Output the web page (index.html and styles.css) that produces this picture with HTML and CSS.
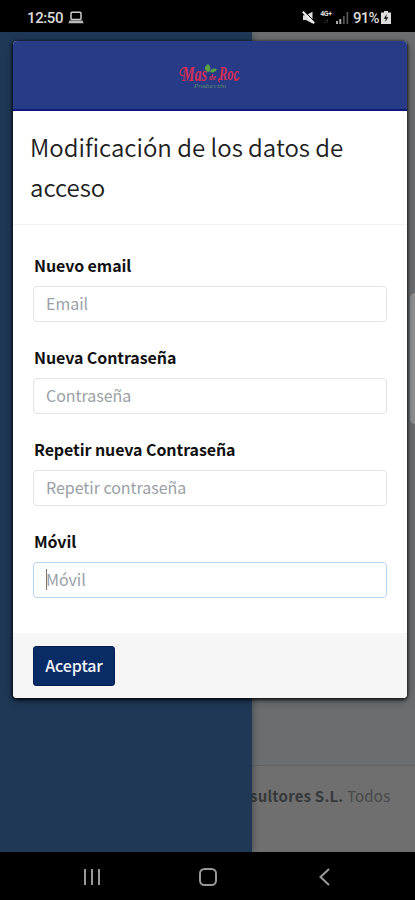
FILE: index.html
```html
<!DOCTYPE html>
<html lang="es">
<head>
<meta charset="utf-8">
<meta name="viewport" content="width=device-width, initial-scale=1">
<title>Modificación de los datos de acceso</title>
<link rel="stylesheet" href="styles.css">
</head>
<body>
<div class="phone">
  <header class="status">
    <div class="status-left">
      <span class="clock">12:50</span>
      <svg width="16" height="13" viewBox="0 0 16 13"><rect x="3" y="1.200" width="10" height="7.300" rx="1" fill="none" stroke="#ccc" stroke-width="1.500"/><path d="M1.500 9.500h13l1.200 2.700H.3z" fill="#bbb"/></svg>
    </div>
    <div class="status-right">
      <svg class="mute" width="13" height="13" viewBox="0 0 13 13"><path d="M1 4.200h3L10.500 .8v11.700L4 9H1z" fill="#ddd"/><path d="M2 0l12 12" stroke="#000" stroke-width="1"/><path d="M.8 .8l11.400 11.400" stroke="#eee" stroke-width="2"/></svg>
      <span class="net"><b>4G+</b><i>↓↑</i></span>
      <svg class="signal" width="13" height="12" viewBox="0 0 13 12"><path d="M0 9h2v3H0zM3.300 7h2v5h-2z" fill="#aaa"/><path d="M7 4h1.700v8H7zM10.500 0h1.700v12h-1.700z" fill="#555"/></svg>
      <span class="percent">91%</span>
      <svg width="10" height="13" viewBox="0 0 10 13"><path d="M3 0h4v1.500h3V13H0V1.500h3z" fill="#ddd"/><path d="M5.800 3L2.700 7.700h2.100L4 11l3.400-4.700H5.200z" fill="#111"/></svg>
    </div>
  </header>
  <main class="app">
    <aside class="sidebar"></aside>
    <section class="page">
      <div class="page-body"></div>
      <footer class="page-footer"><strong>sultores S.L.</strong> <span>Todos</span></footer>
    </section>
    <div class="edge-handle"></div>
    <form class="modal">
      <div class="brand">
        <svg width="68" height="32" viewBox="0 0 68 32">
          <g class="brand-name"><text x="6" y="19" font-size="20" textLength="25" lengthAdjust="spacingAndGlyphs">Mas</text><text x="33" y="18" font-size="8" textLength="7" lengthAdjust="spacingAndGlyphs">de</text><text x="43" y="18" font-size="18" textLength="20" lengthAdjust="spacingAndGlyphs">Roc</text></g>
          <path d="M8 14Q2 13 5 8q3-4 6-1M44 20q-3-1 0-4M58 18q5 1 5-3" fill="none" stroke="#d52d58" stroke-width="1.200"/>
          <path d="M33 10c-6-1-5-6-1-8 3 2 3 6 1 8zM34 10c1-4 4-4 7-3-1 3-4 4-7 3z" fill="#59a044"/>
          <text class="brand-sub" x="18" y="26" textLength="32" lengthAdjust="spacingAndGlyphs">Producción</text>
        </svg>
      </div>
      <h1>Modificación de los datos de acceso</h1>
      <div class="fields">
        <div class="field"><label for="email">Nuevo email</label><input id="email" placeholder="Email"></div>
        <div class="field"><label for="pass">Nueva Contraseña</label><input id="pass" placeholder="Contraseña"></div>
        <div class="field"><label for="repeat">Repetir nueva Contraseña</label><input id="repeat" placeholder="Repetir contraseña"></div>
        <div class="field active"><label for="mobile">Móvil</label><input id="mobile" placeholder="Móvil"><span class="caret"></span></div>
      </div>
      <div class="actions"><button type="button">Aceptar</button></div>
    </form>
  </main>
  <nav class="navbar">
    <svg width="20" height="20" viewBox="0 0 20 20"><path d="M4 2v16M11 2v16M18 2v16" stroke="#999" stroke-width="2"/></svg>
    <svg width="20" height="20" viewBox="0 0 20 20"><rect x="2" y="2" width="16" height="16" rx="4.500" fill="none" stroke="#999" stroke-width="2"/></svg>
    <svg width="20" height="20" viewBox="0 0 20 20"><path d="M15 2L6.500 10l8.500 8" fill="none" stroke="#999" stroke-width="2"/></svg>
  </nav>
</div>
</body>
</html>
```
FILE: styles.css
```css
* { box-sizing: border-box; }
body { margin: 0; background: #000; font-family: "Noto Sans CJK JP", "Open Sans", sans-serif; }
svg { display: block; flex: none; }
.phone { width: 415px; height: 900px; display: flex; flex-direction: column; overflow: hidden; }
.status { height: 32px; flex: none; display: flex; justify-content: space-between; padding: 3px 24px 0 27px; color: #ddd; font-family: Roboto, sans-serif; font-size: 15px; font-weight: 500; }
.status-left, .status-right { display: flex; align-items: center; }
.status-left { gap: 5px; }
.clock { letter-spacing: -.4px; }
.mute { margin-right: 4px; }
.net { width: 14px; display: flex; flex-direction: column; font-size: 7px; line-height: 7px; align-items: center; letter-spacing: -.3px; }
.net i { font-style: normal; color: #888; font-size: 5px; line-height: 6px; }
.signal { margin: 0 4px 0 3px; }
.percent { width: 27px; letter-spacing: -.8px; margin-right: 1px; }
.app { height: 820px; flex: none; position: relative; display: flex; background: #6f6f6f; }
.sidebar { width: 252px; flex: none; background: #1e3856; box-shadow: 0 0 7px rgba(0,0,0,.4); z-index: 1; }
.page { flex: 1; min-width: 0; display: flex; flex-direction: column; }
.page-body { height: 734px; background: #6b6e71; border-bottom: 1px solid #5e6369; }
.page-footer { padding: 18px 0 0; font-size: 15px; line-height: 24px; color: #46494b; white-space: nowrap; letter-spacing: .2px; margin-left: -2px; }
.page-footer strong { color: #35393b; }
.edge-handle { position: absolute; right: 0; top: 261px; width: 5px; height: 131px; border-radius: 5px 0 0 5px; background: #909090; }
.modal { position: absolute; z-index: 2; left: 13px; top: 9px; width: 394px; height: 657px; display: flex; flex-direction: column; background: #fff; border-radius: 4px; overflow: hidden; box-shadow: 0 1px 3px 1px rgba(0,0,0,.7), 0 3px 9px rgba(0,0,0,.35); }
.brand { height: 70px; flex: none; display: flex; justify-content: center; padding-top: 21px; background: #283b87; border-bottom: 2px solid #10177a; }
.brand-name { font-family: "Liberation Serif", serif; font-style: italic; font-weight: bold; fill: #d52d58; }
.brand-sub { font-family: "Liberation Serif", serif; font-style: italic; font-size: 6px; fill: #5e8d70; }
h1 { margin: 0; height: 114px; flex: none; padding: 16px 17px; border-bottom: 1px solid #f2f2f2; font-size: 24px; font-weight: 350; line-height: 40px; color: #202020; }
.fields { height: 408px; flex: none; padding: 28px 20px 0; display: flex; flex-direction: column; gap: 32px; }
.field { height: 60px; flex: none; position: relative; font-size: 16px; }
label { display: block; height: 33px; padding: 0 0 0 1px; line-height: 24px; font-weight: 700; letter-spacing: -.09px; color: #111; }
input { display: block; width: 354px; height: 36px; padding: 0 12px 2px; border: 1px solid #e1e3e6; border-radius: 4px; background: #fff; font: 16px/24px "Noto Sans CJK JP", sans-serif; letter-spacing: -.03px; outline: none; }
input::placeholder { color: #999fa5; opacity: 1; }
.active input { border-color: #b9d5f6; }
.caret { position: absolute; left: 13px; top: 40px; width: 1px; height: 21px; background: #777; }
.actions { flex: 1; padding: 13px 20px; background: #f6f6f6; }
button { display: block; width: 82px; height: 40px; padding: 0 0 2px; border: 1px solid #061d52; border-radius: 3px; background: #092c67; color: #f3f4f8; font: 500 16px/24px "Noto Sans CJK JP", sans-serif; letter-spacing: -.1px; }
.navbar { flex: 1; display: flex; justify-content: space-between; align-items: center; padding: 2px 81px 0 81px; }
```
